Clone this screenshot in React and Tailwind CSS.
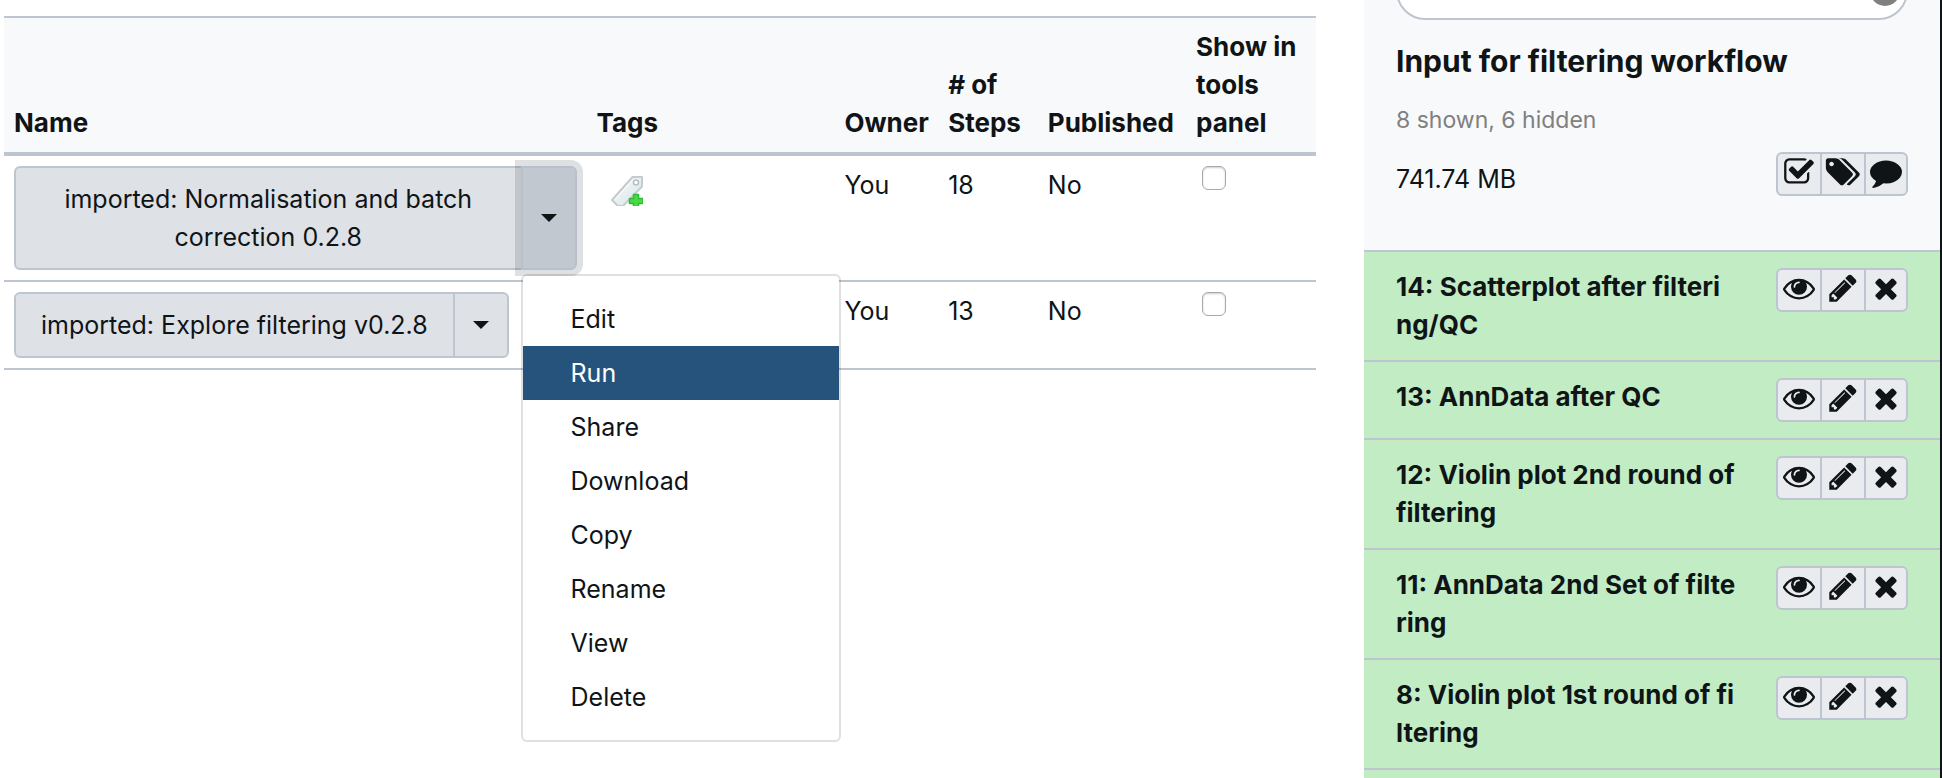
import React from "react";

const paths = {
  check: "M1472 930v318q0 119-84.5 203.5t-203.5 84.5h-832q-119 0-203.5-84.5t-84.5-203.5v-832q0-119 84.5-203.5t203.5-84.5h832q63 0 117 25 15 7 18 23 3 17-9 29l-49 49q-10 10-23 10-3 0-9-2-23-6-45-6h-832q-66 0-113 47t-47 113v832q0 66 47 113t113 47h832q66 0 113-47t47-113v-254q0-13 9-22l64-64q10-10 23-10 6 0 12 3 20 8 20 29zm231-489l-814 814q-24 24-57 24t-57-24l-430-430q-24-24-24-57t24-57l110-110q24-24 57-24t57 24l263 263 647-647q24-24 57-24t57 24l110 110q24 24 24 57t-24 57z",
  tags: "M384 448q0-53-37.5-90.5t-90.5-37.5-90.5 37.5-37.5 90.5 37.5 90.5 90.5 37.5 90.5-37.5 37.5-90.5zm1067 576q0 53-37 90l-491 492q-39 37-91 37-53 0-90-37l-715-716q-38-37-64.5-101t-26.5-117v-416q0-52 38-90t90-38h416q53 0 117 26.5t102 64.5l715 714q37 39 37 91zm384 0q0 53-37 90l-491 492q-39 37-91 37-36 0-59-14t-53-45l470-470q37-37 37-90 0-52-37-91l-715-714q-38-38-102-64.5t-117-26.5h224q53 0 117 26.5t102 64.5l715 714q37 39 37 91z",
  comment: "M1792 896q0 174-120 321.5t-326 233-450 85.5q-70 0-145-8-198 175-460 242-49 14-114 22-17 2-30.5-9t-17.5-29v-1q-3-4-.5-12t2-10 4.5-9.5l6-9 7-8.5 8-9q7-8 31-34.5t34.5-38 31-39.5 32.5-51 27-59 26-76q-157-89-247.5-220t-90.5-281q0-130 71-248.5t191-204.5 286-136.5 348-50.5 348 50.5 286 136.5 191 204.5 71 248.5z",
  eye: "M1664 960q-152-236-381-353 61 104 61 225 0 185-131.5 316.5t-316.5 131.5-316.5-131.5-131.5-316.5q0-121 61-225-229 117-381 353 133 205 333.5 326.5t434.5 121.5 434.5-121.5 333.5-326.5zm-720-384q0-20-14-34t-34-14q-125 0-214.5 89.5t-89.5 214.5q0 20 14 34t34 14 34-14 14-34q0-86 61-147t147-61q20 0 34-14t14-34zm848 384q0 34-20 69-140 230-376.5 368.5t-499.5 138.5-499.5-139-376.5-368q-20-35-20-69t20-69q140-229 376.5-368t499.5-139 499.5 139 376.5 368q20 35 20 69z",
  pencil: "M491 1536l91-91-235-235-91 91v107h128v128h107zm523-928q0-22-22-22-10 0-17 7l-542 542q-7 7-7 17 0 22 22 22 10 0 17-7l542-542q7-7 7-17zm-54-192l416 416-832 832h-416v-416zm683 96q0 53-37 90l-166 166-416-416 166-165q36-38 90-38 53 0 91 38l235 234q37 39 37 91z",
  times: "M1490 1322q0 40-28 68l-136 136q-28 28-68 28t-68-28l-294-294-294 294q-28 28-68 28t-68-28l-136-136q-28-28-28-68t28-68l294-294-294-294q-28-28-28-68t28-68l136-136q28-28 68-28t68 28l294 294 294-294q28-28 68-28t68 28l136 136q28 28 28 68t-28 68l-294 294 294 294q28 28 28 68z",
};

function Icon({ name }) {
  return (
    <svg viewBox="0 0 1792 1792" className="size-8 overflow-visible fill-current" aria-hidden="true">
      <path d={paths[name]} />
    </svg>
  );
}

function IconGroup({ items }) {
  return (
    <div className="flex h-11 w-[132px] shrink-0 divide-x-2 divide-[#bdc6d0] overflow-hidden rounded-md border-2 border-[#bdc6d0] bg-[#eaebef]">
      {items.map(([icon, label]) => (
        <button key={icon} type="button" aria-label={label} className="flex w-11 items-center justify-center pb-1 last:w-10">
          <Icon name={icon} />
        </button>
      ))}
    </div>
  );
}

function Caret() {
  return (
    <svg viewBox="0 0 16 8" className="h-2 w-4 fill-current" aria-hidden="true">
      <path d="M0 0H16L8 8Z" />
    </svg>
  );
}

function AddTagIcon() {
  return (
    <svg viewBox="0 0 32 30" className="h-[30px] w-8" aria-hidden="true">
      <defs>
        <linearGradient id="tagFill" x1="0" y1="0" x2="1" y2="1">
          <stop offset="0" stopColor="#f6fafa" />
          <stop offset="1" stopColor="#d9e5e6" />
        </linearGradient>
      </defs>
      <path d="M21.500 1H31V10.500L12 30H7L1 24Z" fill="url(#tagFill)" stroke="#c3cccf" strokeWidth="2" strokeLinejoin="round" />
      <path d="M22 3.500L4 23.500" stroke="#fff" strokeWidth="1" />
      <circle cx="25" cy="6.500" r="2.500" fill="#fff" stroke="#b7c1c5" strokeWidth="1.600" />
      <path d="M22.500 18.500H27.500V22.500H32V27.500H27.500V31H22.500V27.500H18.500V22.500H22.500Z" fill="#43dc43" stroke="#33b83a" strokeWidth="1.500" strokeLinejoin="round" />
    </svg>
  );
}

const menuItems = ["Edit", "Run", "Share", "Download", "Copy", "Rename", "View", "Delete"];

function DropdownMenu() {
  return (
    <ul role="menu" className="absolute top-full left-0 z-10 mt-1 w-80 rounded-md border-2 border-black/12 bg-white bg-clip-padding py-4">
      {menuItems.map((item) => (
        <li key={item} role="none">
          <a
            href="#"
            role="menuitem"
            className={item === "Run" ? "block bg-[#25537b] px-12 py-2 text-white" : "block px-12 py-2"}
          >
            {item}
          </a>
        </li>
      ))}
    </ul>
  );
}

function SplitButton({ name, open }) {
  return (
    <div className="inline-flex align-top">
      <button type="button" className="-mr-0.5 rounded-l-md border-2 border-[#bdc6d0] bg-[#dee1e5] px-[25px] py-3 text-center">
        {name}
      </button>
      <div className="relative flex shrink-0">
        <button
          type="button"
          aria-label={"Options for " + name}
          aria-expanded={open}
          className={
            open
              ? "flex w-14 items-center justify-center rounded-r-md border-2 border-[#b8c1cb] bg-[#c1c8d0] shadow-[0_0_0_6px_rgba(30,35,40,0.14)]"
              : "flex w-14 items-center justify-center rounded-r-md border-2 border-[#bdc6d0] bg-[#dee1e5]"
          }
        >
          <Caret />
        </button>
        {open && <DropdownMenu />}
      </div>
    </div>
  );
}

const workflows = [
  { name: "imported: Normalisation and batch correction 0.2.8", owner: "You", steps: 18, published: "No", open: true, taggable: true },
  { name: "imported: Explore filtering v0.2.8", owner: "You", steps: 13, published: "No", open: false, taggable: false },
];

const columns = [
  ["Name", "w-[44.4%]"],
  ["Tags", "w-[18.9%]"],
  ["Owner", "w-[7.9%]"],
  ["# of Steps", "w-[7.6%]"],
  ["Published", "w-[11.3%]"],
  ["Show in tools panel", "w-[9.9%]"],
];

function WorkflowTable() {
  return (
    <table className="w-full table-fixed border-collapse text-left">
      <thead>
        <tr className="border-t-2 border-b-4 border-[#bdc6d0] bg-[#f8f9fb] text-[26px]">
          {columns.map(([label, width]) => (
            <th key={label} scope="col" className={width + " py-2.5 pl-2.5 align-bottom font-bold"}>
              {label}
            </th>
          ))}
        </tr>
      </thead>
      <tbody>
        {workflows.map((w) => (
          <tr key={w.name} className="border-b-2 border-[#bdc6d0] align-top">
            <td className="px-2.5 py-2.5">
              <SplitButton name={w.name} open={w.open} />
            </td>
            <td className="px-6 py-5">
              {w.taggable && (
                <button type="button" aria-label="Add tags" className="block">
                  <AddTagIcon />
                </button>
              )}
            </td>
            <td className="p-2.5">{w.owner}</td>
            <td className="p-2.5">{w.steps}</td>
            <td className="p-2.5">{w.published}</td>
            <td className="p-2.5">
              <input
                type="checkbox"
                aria-label={"Show " + w.name + " in tools panel"}
                className="ml-1.5 block size-6 appearance-none rounded-md border border-[#a9a9a9] bg-white shadow-[inset_0_1px_2px_rgba(0,0,0,0.2)]"
              />
            </td>
          </tr>
        ))}
      </tbody>
    </table>
  );
}

const datasets = [
  "14: Scatterplot after filteri\nng/QC",
  "13: AnnData after QC",
  "12: Violin plot 2nd round of\nfiltering",
  "11: AnnData 2nd Set of filte\nring",
  "8: Violin plot 1st round of fi\nltering",
];

const datasetActions = [
  ["eye", "View data"],
  ["pencil", "Edit attributes"],
  ["times", "Delete"],
];

function HistoryPanel() {
  return (
    <aside className="flex w-[578px] shrink-0 flex-col overflow-hidden border-r-2 border-[#0f1417] bg-[#f8f9fb]">
      <div className="px-8 pb-[52px]">
        <div className="relative -mt-[38px]">
          <input
            type="text"
            aria-label="Search datasets"
            placeholder="search datasets"
            className="block h-[58px] w-full rounded-full border-2 border-[#bdc6d0] bg-white px-7 placeholder-[#9a9a9a]"
          />
          <button type="button" aria-label="Clear search" className="absolute top-3.5 right-2 size-[30px] rounded-full bg-[#808080]" />
        </div>
        <h2 className="mt-5 text-[30px] leading-[42px] font-bold">Input for filtering workflow</h2>
        <p className="mt-5 text-[23px] leading-9 text-[#808080]">8 shown, 6 hidden</p>
        <div className="mt-3.5 flex items-start justify-between">
          <span className="pt-2">741.74 MB</span>
          <IconGroup
            items={[
              ["check", "Operations on multiple datasets"],
              ["tags", "Edit history tags"],
              ["comment", "Edit history annotation"],
            ]}
          />
        </div>
      </div>
      <ul className="flex-1 bg-[#c2ecc4]">
        {datasets.map((title) => (
          <li key={title} className="flex items-start justify-between border-t-2 border-[#bdc6d0] px-8 py-4 last:border-b-2">
            <a href="#" className="text-[26px] font-bold whitespace-pre-line">
              {title}
            </a>
            <IconGroup items={datasetActions} />
          </li>
        ))}
      </ul>
    </aside>
  );
}

export default function App() {
  return (
    <div className="flex h-screen overflow-hidden bg-white font-[Inter,'Liberation_Sans',sans-serif] text-[25px] leading-[38px] text-[#0f1417]">
      <main className="min-w-0 flex-1 pt-4 pr-12 pl-1">
        <WorkflowTable />
      </main>
      <HistoryPanel />
    </div>
  );
}
